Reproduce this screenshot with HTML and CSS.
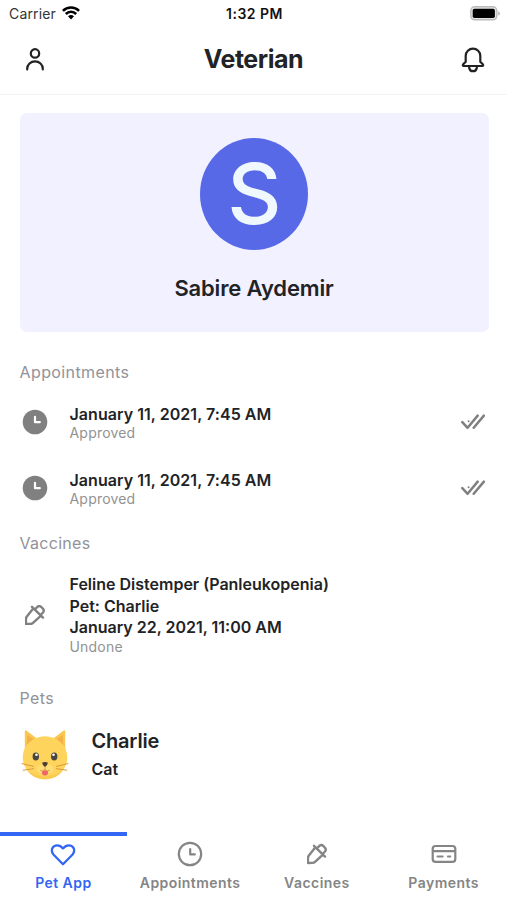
FILE: index.html
```html
<!DOCTYPE html>
<html lang="en">
<head>
<meta charset="utf-8">
<title>Veterian</title>
<link rel="stylesheet" href="styles.css">
</head>
<body>
<svg class="defs" aria-hidden="true">
  <symbol id="clock-full" viewBox="0 0 26 26"><circle cx="13" cy="13" r="12.3" fill="currentColor"/><path d="M13 7.8v5.4h4.8" fill="none" stroke="#fff" stroke-width="2.2" stroke-linecap="round" stroke-linejoin="round"/></symbol>
  <symbol id="clock" viewBox="0 0 26 26"><g fill="none" stroke="currentColor" stroke-width="2.2" stroke-linecap="round" stroke-linejoin="round"><circle cx="13" cy="13" r="11.2"/><path d="M13.2 8v5.4h4.6"/></g></symbol>
  <symbol id="checks" viewBox="0 0 24 16"><path d="M1.3 8.2 6.6 13.8 16.7 1.6M12.7 13.8 22.9 1.6" fill="none" stroke="currentColor" stroke-width="2.5" stroke-linecap="round" stroke-linejoin="round"/><circle cx="7.6" cy="7.3" r="1" fill="currentColor"/></symbol>
  <symbol id="dropper" viewBox="0 0 20 20"><path d="M8 3.8 1.9 11.5Q.8 12.9.9 14.7L1 19l4.3-.1q1.8 0 3-1.2l7.4-6.8M7 1.8 18 12.6M9.7 4.4l2.8-2.6q1.9-1.5 3.8.2l1.7 1.8q1.5 1.9 0 3.7l-2.6 2.8" fill="none" stroke="currentColor" stroke-width="2.4" stroke-linecap="round" stroke-linejoin="round"/></symbol>
</svg>
<div class="app">
  <div class="status">
    <div class="carrier"><span>Carrier</span>
      <svg width="18" height="14" viewBox="0 0 18 14"><g fill="none" stroke="#000" stroke-width="2.5"><path d="M.9 4.9Q4.3 1.5 9 1.5t8.1 3.4"/><path d="M3.8 8Q6 5.8 9 5.8T14.2 8"/></g><path d="M6 10.3Q9 7.8 12 10.3L9 13.5Z"/></svg>
    </div>
    <div class="time">1:32 PM</div>
    <svg class="battery" width="30" height="15" viewBox="0 0 30 15"><rect x=".8" y=".8" width="26" height="13" rx="3.8" fill="#e4e4e4" stroke="#bbb" stroke-width="1.4"/><rect x="2.7" y="2.8" width="22.2" height="9.2" rx="1.8"/><path d="M28.3 5q3 2.4 0 4.8z" fill="#aaa"/></svg>
  </div>
  <header class="header">
    <svg width="18" height="23" viewBox="0 0 18 23"><g fill="none" stroke="#222" stroke-width="2.2" stroke-linecap="round"><circle cx="9" cy="5.4" r="4.2"/><path d="M1.2 21.4v-.6a7.8 7.4 0 0 1 15.6 0v.6"/></g></svg>
    <h1>Veterian</h1>
    <svg width="24" height="26" viewBox="0 0 24 26"><g fill="none" stroke="#222" stroke-width="2.2" stroke-linecap="round" stroke-linejoin="round"><path d="M4.7 14.7V8.9a7.3 7.2 0 0 1 14.6 0v5.8l2.7 2.9q.6 1.3-.7 1.4H2.7q-1.3-.1-.7-1.4Z"/><path d="M8.2 19.8v1.1q.7 3.3 3.8 3.3t3.8-3.3v-1.1"/></g></svg>
  </header>
  <main>
    <section class="profile">
      <div class="avatar"><span>S</span></div>
      <h2>Sabire Aydemir</h2>
    </section>
    <h3 class="label">Appointments</h3>
    <div class="row">
      <svg class="row-icon" width="26" height="26"><use href="#clock-full"/></svg>
      <div class="text"><b>January 11, 2021, 7:45 AM</b><small>Approved</small></div>
      <svg class="checks" width="24" height="16"><use href="#checks"/></svg>
    </div>
    <div class="row">
      <svg class="row-icon" width="26" height="26"><use href="#clock-full"/></svg>
      <div class="text"><b>January 11, 2021, 7:45 AM</b><small>Approved</small></div>
      <svg class="checks" width="24" height="16"><use href="#checks"/></svg>
    </div>
    <h3 class="label vaccines">Vaccines</h3>
    <div class="row tall">
      <svg class="row-icon dropper" width="20" height="20"><use href="#dropper"/></svg>
      <div class="text"><b>Feline Distemper (Panleukopenia)</b><b>Pet: Charlie</b><b>January 22, 2021, 11:00 AM</b><small>Undone</small></div>
    </div>
    <h3 class="label pets">Pets</h3>
    <div class="pet">
      <svg width="50" height="52" viewBox="0 0 50 52">
        <path d="M4.8 26V2.3Q5 .5 6.7 1.8L20 12 10 27ZM45.2 26V2.3Q45 .5 43.3 1.8L30 12 40 27Z" fill="#fbc750"/>
        <path d="M6.8 16 7.2 6 15.5 11.5ZM43.2 16 42.8 6 34.5 11.5Z" fill="#f2b246"/>
        <ellipse cx="25" cy="28.5" rx="22.3" ry="21.3" fill="#ffd45c"/>
        <path d="M6 40q7 10.5 19 10.5T44 40q-8 7-19 7T6 40Z" fill="#fbca50"/>
        <ellipse cx="25" cy="40" rx="8.5" ry="5" fill="#ffdd75"/>
        <ellipse cx="15.8" cy="27.5" rx="3.2" ry="3.9" fill="#4b4543"/><ellipse cx="34.2" cy="27.5" rx="3.2" ry="3.9" fill="#4b4543"/>
        <circle cx="16.5" cy="25.8" r="1.3" fill="#fff"/><circle cx="33.5" cy="25.8" r="1.3" fill="#fff"/>
        <path d="M22.3 33.6q2.7-1 5.4 0 .3 2-2.7 4.3-3-2.3-2.7-4.3Z" fill="#4b3b34"/>
        <path d="M22 42q3-1.5 6 0 .6 4.6-3 4.6T22 42Z" fill="#f0646c"/>
        <path d="M25 38v2.3q-2.2 3-5 1M25 40.3q2.2 3 5 1" fill="none" stroke="#d39c48" stroke-width=".8"/>
        <path d="m2 34.6 11.5 2.8M3.2 41.2l10.3-1.5M48 34.6l-11.5 2.8M46.8 41.2l-10.3-1.5" stroke="#d99a3b" stroke-width="1" stroke-linecap="round"/>
      </svg>
      <div class="pet-text"><strong>Charlie</strong><span>Cat</span></div>
    </div>
  </main>
  <nav class="tabs">
    <a class="active"><svg width="26" height="26" viewBox="0 0 26 26"><path d="M13 23.2 3.4 13.5C.1 9.2 2.6 4.4 7.2 4.4c2.6 0 4 .9 5.8 3 1.8-2.1 3.2-3 5.8-3 4.6 0 7.1 4.8 3.8 9.1Z" fill="none" stroke="currentColor" stroke-width="2.3" stroke-linejoin="round"/></svg><span>Pet App</span></a>
    <a><svg width="26" height="26"><use href="#clock"/></svg><span>Appointments</span></a>
    <a><svg class="dropper" width="20" height="26"><use href="#dropper"/></svg><span>Vaccines</span></a>
    <a><svg width="26" height="26" viewBox="0 0 26 26"><g fill="none" stroke="currentColor" stroke-width="2.2" stroke-linecap="round"><rect x="1.7" y="5" width="22.6" height="15.8" rx="2.8"/><path d="M2 10.2h22M6.6 15.5h5M17 15.5h2.2"/></g></svg><span>Payments</span></a>
  </nav>
</div>
</body>
</html>
```
FILE: styles.css
```css
* { box-sizing: border-box; margin: 0; padding: 0; }
body { background: #fff; color: #222326; font-family: Inter, "Liberation Sans", sans-serif; }
svg { display: block; flex: none; }
.defs { display: none; }
.app { width: 507px; height: 900px; display: flex; flex-direction: column; overflow: hidden; }
.status { height: 27px; display: grid; grid-template-columns: 1fr auto 1fr; align-items: center; padding: 0 7px 0 9px; color: #111; }
.carrier { display: flex; gap: 6px; align-items: center; font-size: 14px; letter-spacing: .15px; color: #333; }
.carrier svg { margin-top: -2px; }
.time { font-size: 14px; font-weight: 600; letter-spacing: .5px; }
.battery { justify-self: end; }
.header { height: 68px; display: flex; align-items: center; justify-content: space-between; padding: 0 22px 2px 26px; border-bottom: 1px solid #f3f3f5; }
h1 { margin: -1px 0 0 2px; font-size: 25px; line-height: 30px; font-weight: 700; letter-spacing: -.45px; }
main { flex: 1; padding: 18px 18.5px 0 19.5px; }
.profile { height: 219px; background: #f2f1ff; border-radius: 7px; display: flex; flex-direction: column; align-items: center; padding-top: 25px; }
.avatar { width: 108px; height: 112px; border-radius: 50%; background: #5869e8; color: #f0f8ff; display: flex; justify-content: center; align-items: center; font-size: 84px; font-weight: 500; letter-spacing: -1px; line-height: 114px; }
h2 { margin-top: 24px; font-size: 22px; line-height: 28px; font-weight: 600; letter-spacing: -.15px; }
.label { font-size: 16px; line-height: 20px; font-weight: 400; color: #929299; margin-top: 30px; letter-spacing: .4px; }
.row { height: 66px; display: flex; align-items: center; padding: 0 4px 0 2.5px; }
.label + .row { margin-top: 7px; }
.row-icon { color: #808080; margin-right: 21.5px; }
.row-icon.dropper { margin: 0 24.5px 0 3px; }
.text { flex: 1; display: flex; flex-direction: column; margin-top: -1px; }
.text b { font-size: 16px; line-height: 21.5px; font-weight: 600; }
.text small { font-size: 14px; line-height: 16px; color: #929292; letter-spacing: .2px; }
.row:not(.tall) .text b { letter-spacing: .05px; line-height: 22px; }
.checks { color: #808080; }
.label.vaccines { margin-top: 12px; letter-spacing: .3px; }
.row.tall { height: 82px; }
.vaccines + .row.tall { margin-top: 21px; }
.label.pets { margin-top: 32px; }
.pet { display: flex; align-items: center; gap: 22px; margin-top: 19px; }
.pet-text { display: flex; flex-direction: column; }
.pet-text strong { font-size: 20px; line-height: 28px; font-weight: 600; letter-spacing: -.2px; }
.pet-text span { font-size: 16px; line-height: 28px; font-weight: 600; }
.tabs { height: 68px; display: grid; grid-template-columns: repeat(4, 1fr); color: #858585; }
.tabs a { border-top: 4px solid transparent; display: flex; flex-direction: column; align-items: center; padding-top: 5px; font-size: 14px; line-height: 20px; font-weight: 600; letter-spacing: .45px; }
.tabs span { margin-top: 6px; }
.tabs .active { color: #3366f5; border-color: #3366f5; }
```
